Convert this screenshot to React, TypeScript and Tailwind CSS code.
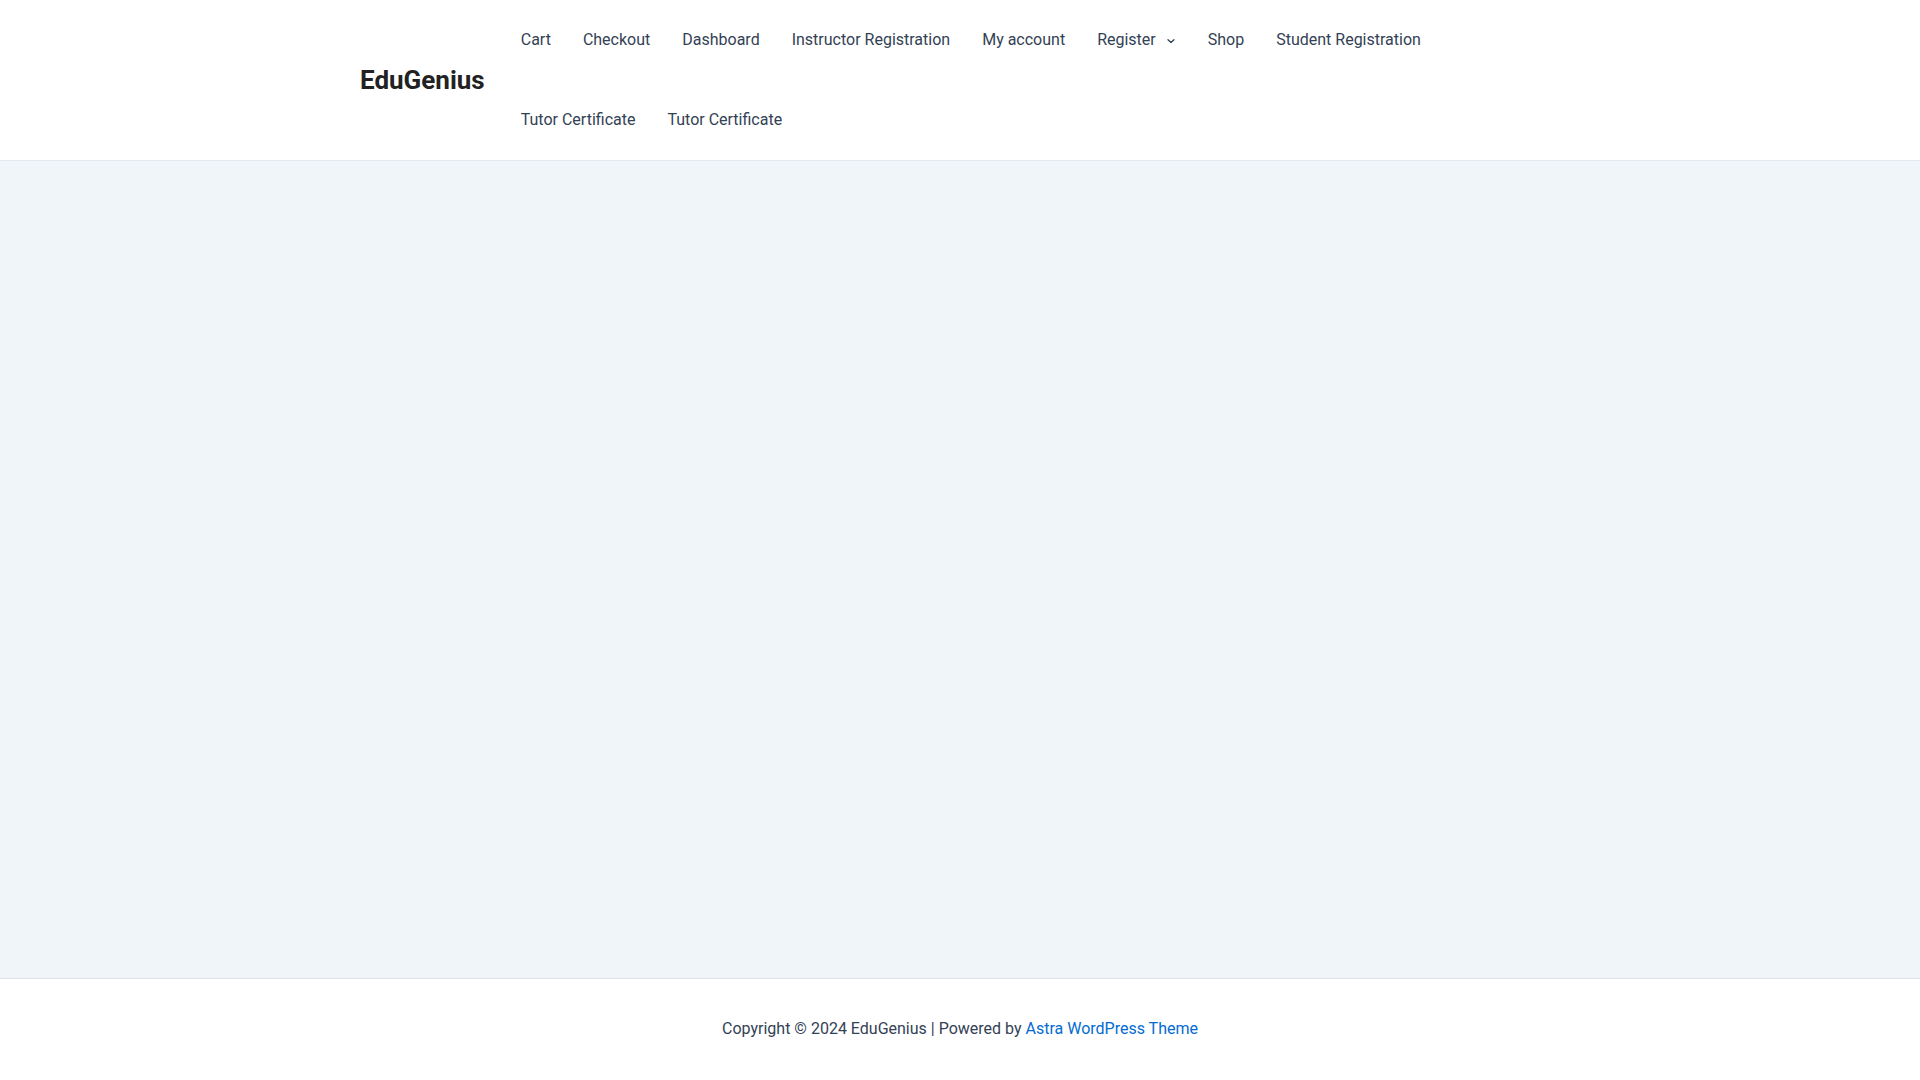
import React from "react";

const links = [
  "Cart",
  "Checkout",
  "Dashboard",
  "Instructor Registration",
  "My account",
  "Register",
  "Shop",
  "Student Registration",
  "Tutor Certificate",
  "Tutor Certificate",
];

function Chevron() {
  return (
    <svg width="10" height="10" viewBox="0 0 10 10" className="ml-[10px] mt-[1px]" fill="none">
      <path d="M2 3.8 L5 6.6 L8 3.8" stroke="#334155" strokeWidth="1.3" strokeLinecap="round" strokeLinejoin="round" />
    </svg>
  );
}

export default function App() {
  return (
    <div className="flex min-h-screen flex-col bg-[#f0f5fa] font-['Roboto',sans-serif] text-[#334155]">
      <header className="border-b border-[#e5e9ef] bg-white">
        <div className="mx-auto flex h-[160px] w-[1240px] items-center gap-5 px-5">
          <a className="text-[26px] font-bold leading-none text-[#222222]">EduGenius</a>
          <nav className="flex flex-1 flex-wrap">
            {links.map((l, i) => (
              <a key={i} className="flex h-20 items-center px-4 text-[16px] text-[#334155]">
                {l}
                {l === "Register" && <Chevron />}
              </a>
            ))}
          </nav>
        </div>
      </header>
      <main className="flex-1" />
      <footer className="flex h-[102px] items-center justify-center border-t border-[#dde3ea] bg-white pb-[2px] text-[16px]">
        <span>
          Copyright © 2024 EduGenius | Powered by{" "}
          <a className="text-[#046bd2]">Astra WordPress Theme</a>
        </span>
      </footer>
    </div>
  );
}
